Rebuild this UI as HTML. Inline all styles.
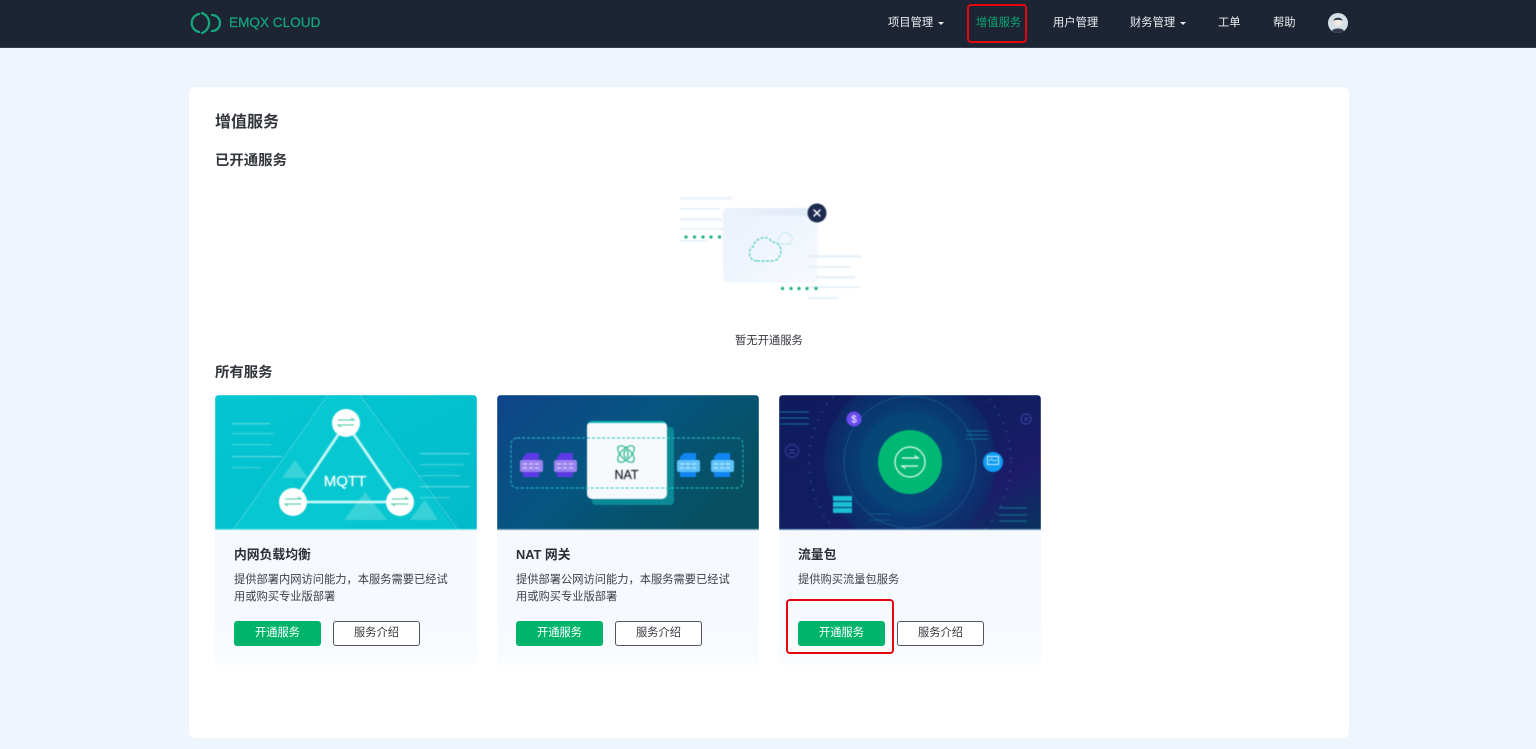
<!DOCTYPE html>
<html lang="zh">
<head>
<meta charset="utf-8">
<title>增值服务</title>
<style>
*{box-sizing:border-box}
html,body{margin:0;padding:0;width:1536px;height:749px;overflow:hidden;background:#eef5fc;font-family:"Liberation Sans","Noto Sans CJK SC",sans-serif;color:#1f2330}
.a{position:absolute;white-space:nowrap}
#nav{position:absolute;left:0;top:0;width:1536px;height:48px;background:#1d2433;border-bottom:1px solid #343b4c}
.n{position:absolute;top:15px;font-size:11.3px;line-height:16px;color:#eef0f3;white-space:nowrap}
.car{position:absolute;top:21.5px;width:0;height:0;border-left:3px solid transparent;border-right:3px solid transparent;border-top:3.5px solid #e8eaee}
#main{position:absolute;left:189px;top:87px;width:1159.5px;height:651px;background:#fff;border-radius:6px}
.h{position:absolute;font-weight:700;white-space:nowrap;color:#33363d}
.card{position:absolute;top:395px;width:262px;height:270px;background:linear-gradient(#f6fafe 85%,#fafcfe);border-radius:4px 4px 0 0;overflow:hidden}
.card svg{position:absolute;left:0;top:0;display:block;filter:blur(.45px)}
.t{position:absolute;left:19px;top:151px;font-size:12.8px;line-height:18px;font-weight:700;color:#2b2e35;white-space:nowrap}
.d{position:absolute;left:19px;top:176.500px;width:222px;font-size:11.25px;line-height:17px;color:#3d4048}
.b{position:absolute;top:226px;width:87px;height:25px;border-radius:3px;font-size:11.25px;line-height:25px;text-align:center}
.g{left:19px;background:#00b46c;color:#fff}
.w{left:118px;background:#fff;border:1px solid #53565d;line-height:23px;color:#33363c}
.r{position:absolute;border:2px solid #e5060f;border-radius:4px}
</style>
</head>
<body>
<div id="nav">
  <svg class="a" style="left:188px;top:11px" width="34" height="24" viewBox="0 0 34 24" fill="none" stroke="#14a87c" stroke-width="2.300" stroke-linecap="round">
    <path d="M11 3A9.200 9.200 0 0 0 11 21"/>
    <path d="M14 2A10.600 10.600 0 0 1 14 22"/>
    <path d="M24 4A8 8 0 0 1 24 20"/>
  </svg>
  <div class="a" style="left:229px;top:14px;font-size:13.6px;line-height:18px;color:#13a57b;font-weight:400;-webkit-text-stroke:.25px #13a57b">EMQX CLOUD</div>
  <div class="n" style="left:888px">项目管理</div><div class="car" style="left:938px"></div>
  <div class="n" style="left:976px;color:#0ba774">增值服务</div>
  <div class="n" style="left:1053px">用户管理</div>
  <div class="n" style="left:1130px">财务管理</div><div class="car" style="left:1180px"></div>
  <div class="n" style="left:1218px">工单</div>
  <div class="n" style="left:1273px">帮助</div>
  <svg class="a" style="left:1328px;top:13px" width="20" height="20" viewBox="0 0 20 20">
    <circle cx="10" cy="10" r="10" fill="#d4e0e6"/>
    <circle cx="10" cy="9" r="4.200" fill="#f3e8df"/>
    <path d="M5.600 8C5.400 3.800 14.600 3.600 14.400 8C13 6.400 7 6.400 5.600 8Z" fill="#2b3340"/>
    <path d="M4 18C5 14.600 15 14.600 16 18A10 10 0 0 1 4 18Z" fill="#303a4c"/>
  </svg>
</div>
<div class="r" style="left:967px;top:4px;width:60px;height:39px"></div>

<div id="main"></div>
<div class="h" style="left:215px;top:112px;font-size:16px;line-height:22px">增值服务</div>
<div class="h" style="left:215px;top:151px;font-size:14.400px;line-height:20px">已开通服务</div>

<svg class="a" style="left:675px;top:190px;filter:blur(.5px)" width="190" height="115" viewBox="0 0 190 115">
  <defs>
    <linearGradient id="pn" x1="0" y1="0" x2="1" y2="1"><stop offset="0" stop-color="#eaf1fb"/><stop offset="1" stop-color="#f7faff"/></linearGradient>
    <linearGradient id="pt" x1="0" y1="0" x2="1" y2="0"><stop offset="0" stop-color="#eef3fb"/><stop offset="1" stop-color="#dfe8f6"/></linearGradient>
  </defs>
  <g fill="#e9f2fb">
    <rect x="5" y="7" width="52" height="2.500"/><rect x="5" y="18" width="40" height="2"/><rect x="5" y="28" width="42" height="2.500"/><rect x="5" y="38" width="48" height="2"/><rect x="5" y="50" width="28" height="2"/>
  </g>
  <rect x="48" y="18" width="95" height="75" rx="6" fill="url(#pn)"/>
  <rect x="48" y="18" width="95" height="8" rx="4" fill="url(#pt)"/>
  <g fill="#e6f0fa">
    <rect x="133" y="65" width="54" height="2.500"/><rect x="133" y="76" width="42" height="2"/><rect x="140" y="86" width="40" height="2.500"/><rect x="133" y="96" width="52" height="2"/><rect x="133" y="107" width="30" height="2"/>
  </g>
  <g fill="#11b077">
    <circle cx="11" cy="47" r="1.600"/><circle cx="19.500" cy="47" r="1.600"/><circle cx="28" cy="47" r="1.600"/><circle cx="36" cy="47" r="1.600"/><circle cx="44.500" cy="47" r="1.600"/>
    <circle cx="107.500" cy="98.500" r="1.600"/><circle cx="116" cy="98.500" r="1.600"/><circle cx="124" cy="98.500" r="1.600"/><circle cx="132" cy="98.500" r="1.600"/><circle cx="141" cy="98.500" r="1.600"/>
  </g>
  <path d="M82 71C74 71 72 60 78 57C79 49 92 43 97 52C104 52 108 60 105 65C104 69 101 71 97 71Z" fill="none" stroke="#21c4a6" stroke-width="1" stroke-dasharray="3 1.500"/>
  <path d="M107 54C102 54 102 48 105 47C106 42 113 41 114 45C117 45 118 49 117 51C116 53 115 54 113 54Z" fill="none" stroke="#9fe0d8" stroke-width=".8" stroke-dasharray="2 1"/>
  <circle cx="142" cy="23" r="9.500" fill="#1d2a50"/>
  <path d="M139 20L145 26M145 20L139 26" stroke="#fff" stroke-width="1.500" stroke-linecap="round"/>
</svg>
<div class="a" style="left:735px;top:333px;font-size:11.3px;line-height:16px;color:#33363c">暂无开通服务</div>
<div class="h" style="left:215px;top:362.500px;font-size:14.400px;line-height:20px">所有服务</div>

<!-- Card 1 -->
<div class="card" style="left:215px">
  <svg width="262" height="135" viewBox="0 0 262 135">
    <defs>
      <linearGradient id="c1" x1="0" y1="0" x2="1" y2="1"><stop offset="0" stop-color="#05c6d2"/><stop offset=".5" stop-color="#03c1cf"/><stop offset="1" stop-color="#03bacb"/></linearGradient>
    </defs>
    <rect width="262" height="135" fill="url(#c1)"/>
    <path d="M115 0H145L240 135H18Z" fill="#0acbd2" opacity=".7"/>
    <path d="M113 0L18 135M145 0L243 135" stroke="#8deaed" stroke-width=".8" stroke-dasharray="1.500 1.500" fill="none"/>
    <g fill="#fff" opacity=".2">
      <path d="M80 65L93 83H67Z"/><path d="M150 97L172 125H129Z"/><path d="M210 105L223 125H195Z"/>
    </g>
    <path d="M131 28L185 107H78L131 28Z" fill="none" stroke="#c4f6f6" stroke-width="2.800"/>
    <g fill="#fff">
      <circle cx="131" cy="28" r="14"/><circle cx="78" cy="107" r="14"/><circle cx="185" cy="107" r="14"/>
    </g>
    <g fill="none" stroke-width="1">
      <g><path d="M123 25H139L136 23" stroke="#44c7a4"/><path d="M139 30H123L126 32" stroke="#44c7a4"/></g>
      <g><path d="M70 104H86L83 102" stroke="#44c7a4"/><path d="M86 109H70L73 111" stroke="#44c7a4"/></g>
      <g><path d="M177 104H193L190 102" stroke="#44c7a4"/><path d="M193 109H177L180 111" stroke="#44c7a4"/></g>
    </g>
    <text x="130" y="91" font-family="Liberation Sans,sans-serif" font-size="15" font-weight="400" fill="#f4ffff" stroke="#f4ffff" stroke-width=".3" text-anchor="middle">MQTT</text>
    <g fill="#6fdfe3" opacity=".75">
      <rect x="17" y="28" width="38" height="1.300"/><rect x="17" y="38" width="43" height="1.300" opacity=".7"/><rect x="17" y="49" width="39" height="1.300" opacity=".7"/><rect x="17" y="61" width="50" height="1.300"/><rect x="17" y="72" width="29" height="1.300" opacity=".7"/>
      <rect x="205" y="58" width="50" height="1.300"/><rect x="205" y="69" width="44" height="1.300" opacity=".7"/><rect x="205" y="80" width="40" height="1.300" opacity=".7"/><rect x="205" y="91" width="50" height="1.300"/><rect x="205" y="102" width="30" height="1.300" opacity=".7"/>
    </g>
    <rect y="134" width="262" height="1" fill="#7febee"/>
  </svg>
  <div class="t">内网负载均衡</div>
  <div class="d">提供部署内网访问能力，本服务需要已经试用或购买专业版部署</div>
  <div class="b g">开通服务</div><div class="b w">服务介绍</div>
</div>

<!-- Card 2 -->
<div class="card" style="left:497px">
  <svg width="262" height="135" viewBox="0 0 262 135">
    <defs>
      <linearGradient id="c2" x1="0" y1="0" x2="1" y2=".6"><stop offset="0" stop-color="#10448a"/><stop offset=".5" stop-color="#055680"/><stop offset="1" stop-color="#07505f"/></linearGradient>
      <g id="srv"><path d="M7 0H19V24H3V4Z" fill="var(--d)"/><rect y="7" width="23" height="12" rx="2" fill="var(--l)"/><path d="M3 11H20M3 15H20" stroke="#fff" stroke-width=".8" stroke-dasharray="4 2"/></g>
    </defs>
    <rect width="262" height="135" fill="url(#c2)"/>
    <rect x="95" y="32" width="82" height="78" rx="4" fill="#0b8a96"/>
    <path d="M90 32V31A5 5 0 0 1 95 26H165A5 5 0 0 1 170 31V32Z" fill="#12b6b4"/>
    <path d="M90 31A3 3 0 0 1 93 28H167A3 3 0 0 1 170 31V99A5 5 0 0 1 165 104H95A5 5 0 0 1 90 99Z" fill="#f6fafd"/>
    <rect x="14" y="43" width="232" height="50" rx="6" fill="none" stroke="#27c3c6" stroke-width=".9" stroke-dasharray="3 2"/>
    <g fill="none" stroke="#14b184" stroke-width="1.100">
      <ellipse cx="129" cy="59" rx="5" ry="10.500" transform="rotate(45 129 59)"/>
      <ellipse cx="129" cy="59" rx="5" ry="10.500" transform="rotate(-45 129 59)"/>
      <ellipse cx="129" cy="59" rx="2" ry="4"/>
    </g>
    <text x="129.500" y="84" font-family="Liberation Sans,sans-serif" font-size="12.500" fill="#21252c" stroke="#21252c" stroke-width=".2" text-anchor="middle">NAT</text>
    <use href="#srv" x="23" y="58" style="--d:#5b3ae6;--l:#9b83f2"/>
    <use href="#srv" x="57" y="58" style="--d:#5b3ae6;--l:#9b83f2"/>
    <use href="#srv" x="180" y="58" style="--d:#0f86f2;--l:#5ec2fb"/>
    <use href="#srv" x="214" y="58" style="--d:#0f86f2;--l:#5ec2fb"/>
    <rect y="134" width="262" height="1" fill="#7fa6c0"/>
  </svg>
  <div class="t">NAT 网关</div>
  <div class="d">提供部署公网访问能力，本服务需要已经试用或购买专业版部署</div>
  <div class="b g">开通服务</div><div class="b w">服务介绍</div>
</div>

<!-- Card 3 -->
<div class="card" style="left:779px">
  <svg width="262" height="135" viewBox="0 0 262 135">
    <defs>
      <linearGradient id="c3" x1="0" y1="0" x2="1" y2="1"><stop offset="0" stop-color="#0f1b5c"/><stop offset=".5" stop-color="#111e60"/><stop offset=".75" stop-color="#1d1c6a"/><stop offset="1" stop-color="#07345e"/></linearGradient>
      <radialGradient id="gl"><stop offset="0" stop-color="#055a7c"/><stop offset=".6" stop-color="#05467a"/><stop offset="1" stop-color="#0e2a68"/></radialGradient>
    </defs>
    <rect width="262" height="135" fill="url(#c3)"/>
    <circle cx="131" cy="67" r="86" fill="url(#gl)" opacity=".8"/>
    <circle cx="131" cy="67" r="50" fill="#05507c" opacity=".4"/>
    <circle cx="131" cy="67" r="101" fill="none" stroke="#3f7098" stroke-width="2" stroke-dasharray="1 8" opacity=".7"/>
    <circle cx="131" cy="67" r="66" fill="none" stroke="#1d7a9b" stroke-width=".5"/>
    <circle cx="131" cy="67" r="32" fill="#00b873"/>
    <circle cx="131" cy="67" r="15" fill="none" stroke="#eafcf4" stroke-width="1.200"/>
    <path d="M123 63H139L135.500 60.500M139 71H123L126.500 73.500" fill="none" stroke="#f2fff9" stroke-width="1.200"/>
    <circle cx="75" cy="24" r="7.500" fill="#6a4cf0"/>
    <text x="75" y="27.500" font-family="Liberation Sans,sans-serif" font-size="10" fill="#fff" text-anchor="middle">$</text>
    <circle cx="214" cy="67" r="10" fill="#0f9df5"/>
    <rect x="208.500" y="61.500" width="11" height="8" fill="none" stroke="#e4f8ff" stroke-width=".9"/>
    <path d="M210 66L212 64L215 66L218 65" stroke="#e4f8ff" stroke-width=".7" fill="none"/>
    <g fill="#19bfd3">
      <rect x="54" y="101" width="19" height="5"/><rect x="54" y="107" width="19" height="5"/><rect x="54" y="113" width="19" height="5"/>
    </g>
    <g stroke="#14acc0" stroke-width=".8" opacity=".8">
      <path d="M1 17H30M1 23H30M1 29H30"/>
      <path d="M187 36H209M187 40H209M187 44H209" opacity=".8"/>
      <path d="M220 113H248M220 120H248M220 126H248"/>
      <path d="M90 119H112M90 125H112" opacity=".5"/>
    </g>
    <g fill="none" stroke="#3f44ad" stroke-width=".9">
      <circle cx="13" cy="56" r="6.500"/><path d="M10 55H16M10 58H16"/>
      <circle cx="247" cy="24" r="5"/><path d="M245 23H249M245 25H249"/>
    </g>
    <rect y="134" width="262" height="1" fill="#6d99c4"/>
  </svg>
  <div class="t">流量包</div>
  <div class="d">提供购买流量包服务</div>
  <div class="b g">开通服务</div><div class="b w">服务介绍</div>
</div>
<div class="r" style="left:786px;top:599px;width:108px;height:55px"></div>
</body>
</html>
